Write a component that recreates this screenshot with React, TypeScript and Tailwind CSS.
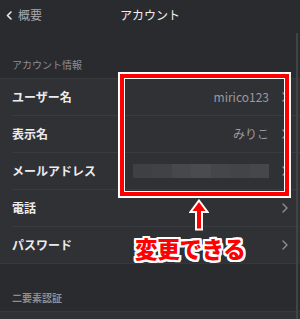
import React from "react";

const font = { fontFamily: '"Noto Sans CJK JP", "Noto Sans", sans-serif' };

function Chevron() {
  return (
    <svg width="6" height="10" viewBox="0 0 6 10" className="shrink-0">
      <path d="M1 1 L5 5 L1 9" fill="none" stroke="#8e8e93" strokeWidth="1.4" strokeLinecap="round" strokeLinejoin="round" />
    </svg>
  );
}

function Row({ label, value, blur }: { label: string; value?: string; blur?: boolean }) {
  return (
    <div className="h-[37px] flex items-center pl-3 relative">
      <div className="flex-1 flex items-center h-full border-b border-[#3a3b40] pr-[12px]">
        <span className="text-[12px] font-semibold text-[#ececee]">{label}</span>
        <div className="flex-1 flex justify-end pr-[13px]">
          {value && <span className="text-[12px] text-[#9a9aa0]">{value}</span>}
          {blur && (
            <div className="flex h-[14px] w-[136px] ml-auto">
              <div className="flex-1 bg-[#3f4044]" />
              <div className="flex-1 bg-[#414246]" />
              <div className="flex-1 bg-[#47484c]" />
              <div className="flex-1 bg-[#4a4b4f]" />
              <div className="flex-1 bg-[#45464a]" />
              <div className="flex-1 bg-[#434448]" />
              <div className="flex-1 bg-[#46474b]" />
            </div>
          )}
        </div>
        <Chevron />
      </div>
    </div>
  );
}

export default function App() {
  const outline =
    "[text-shadow:2px_0_0_#fff,-2px_0_0_#fff,0_2px_0_#fff,0_-2px_0_#fff,2px_2px_0_#fff,-2px_-2px_0_#fff,2px_-2px_0_#fff,-2px_2px_0_#fff,1px_2px_0_#fff,2px_1px_0_#fff,-1px_2px_0_#fff,-2px_1px_0_#fff,1px_-2px_0_#fff,2px_-1px_0_#fff,-1px_-2px_0_#fff,-2px_-1px_0_#fff]";
  return (
    <div style={font} className="relative w-[300px] h-[319px] overflow-hidden bg-[#2a2b2f]">
      <div className="h-[30px] flex items-center relative">
        <div className="flex items-center pl-[6px] gap-[6px]">
          <svg width="6" height="9" viewBox="0 0 6 9">
            <path d="M5 1 L1.5 4.5 L5 8" fill="none" stroke="#e8e8ea" strokeWidth="1.6" strokeLinecap="round" strokeLinejoin="round" />
          </svg>
          <span className="text-[12px] text-[#a9a9ae]">概要</span>
        </div>
        <div className="absolute inset-0 flex items-center justify-center pointer-events-none">
          <span className="text-[12px] text-[#f0f0f2]">アカウント</span>
        </div>
      </div>
      <div className="h-[48px] flex items-end pl-3 pb-[6px]">
        <span className="text-[10px] text-[#8d8d93]">アカウント情報</span>
      </div>
      <div className="bg-[#303135] border-t border-[#37383c]">
        <Row label="ユーザー名" value="mirico123" />
        <Row label="表示名" value="みりこ" />
        <Row label="メールアドレス" blur />
        <Row label="電話" />
        <div className="h-[37px] flex items-center pl-3 pr-[12px] border-b border-[#37383c]">
          <span className="flex-1 text-[12px] font-semibold text-[#ececee]">パスワード</span>
          <Chevron />
        </div>
      </div>
      <div className="h-[48px] flex items-end pl-3 pb-[6px] border-b border-[#37383c]">
        <span className="text-[10px] font-semibold text-[#8d8d93]">二要素認証</span>
      </div>
      <div className="h-[10px] bg-[#303135]" />

      {/* scrollbar */}
      <div className="absolute right-[2px] top-[33px] bottom-0 w-[2px] bg-[#424347]" />

      {/* red highlight box */}
      <div className="absolute left-[118px] top-[72px] w-[173px] h-[126px] border-2 border-white">
        <div className="w-full h-full border-4 border-[#ff0000]">
          <div className="w-full h-full border border-white" />
        </div>
      </div>

      {/* arrow */}
      <svg className="absolute left-[189px] top-[199px]" width="20" height="32" viewBox="0 0 20 32">
        <path d="M10 1.5 L18.5 13 L13 13 L13 30.5 L7 30.5 L7 13 L1.5 13 Z" fill="#ff0000" stroke="#ffffff" strokeWidth="2" strokeLinejoin="miter" />
      </svg>

      {/* text */}
      <div className="absolute left-[135px] top-[233px]">
        <span className={`text-[22.5px] leading-[30px] font-black text-[#ff0000] tracking-[-0.3px] ${outline}`}>変更できる</span>
      </div>
    </div>
  );
}
